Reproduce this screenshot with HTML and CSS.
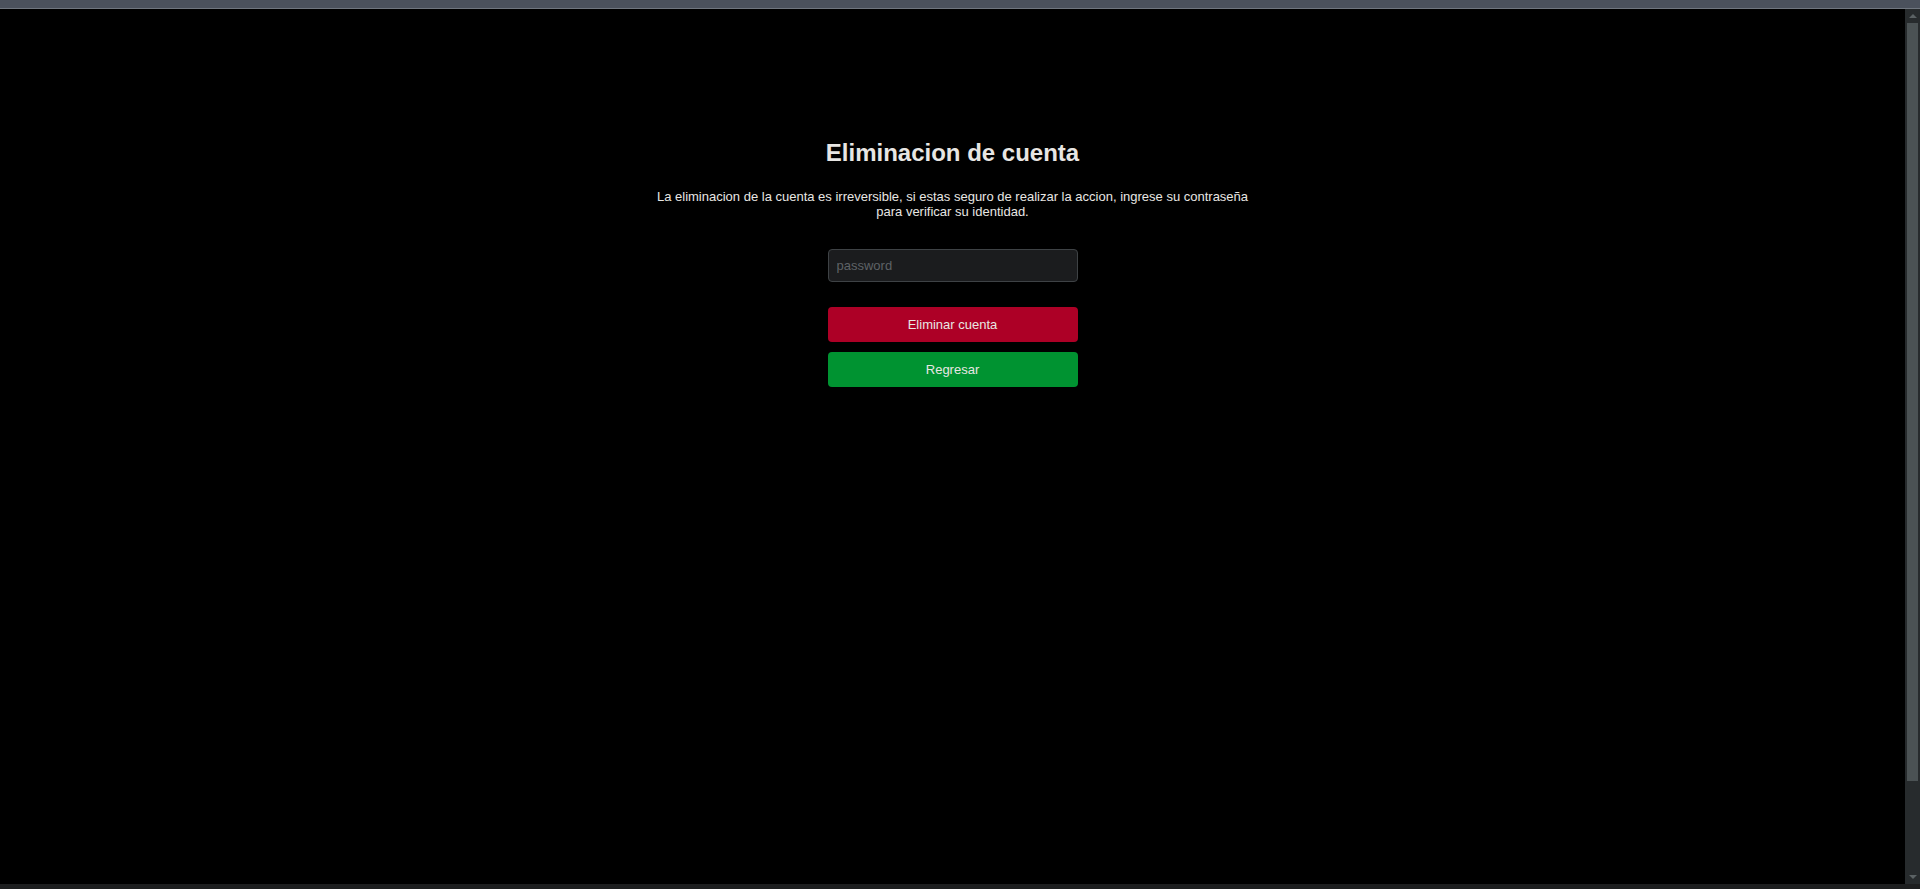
FILE: index.html
```html
<!DOCTYPE html>
<html lang="es">
<head>
<meta charset="utf-8">
<title>Eliminacion de cuenta</title>
<link rel="stylesheet" href="styles.css">
</head>
<body>
<div class="topbar"></div>
<div class="viewport">
  <main class="page">
    <h1 class="title">Eliminacion de cuenta</h1>
    <p class="notice">La eliminacion de la cuenta es irreversible, si estas seguro de realizar la accion, ingrese su contraseña para verificar su identidad.</p>
    <form class="form">
      <input class="field" type="password" placeholder="password">
      <div class="actions">
        <button type="button" class="btn btn-danger">Eliminar cuenta</button>
        <button type="button" class="btn btn-success">Regresar</button>
      </div>
    </form>
  </main>
  <div class="scrollbar">
    <div class="arrow"><span class="tri-up"></span></div>
    <div class="thumb"></div>
    <div class="track-rest"></div>
    <div class="arrow"><span class="tri-down"></span></div>
  </div>
</div>
<div class="bottombar"></div>
</body>
</html>
```

FILE: styles.css
```css
html, body {
  margin: 0;
  padding: 0;
  height: 889px;
  overflow: hidden;
  background: #000;
}
body {
  display: flex;
  flex-direction: column;
  font-family: "Liberation Sans", Arial, sans-serif;
  color: #e8e6e3;
}
.topbar {
  height: 8px;
  background: #4b515c;
  border-bottom: 1px solid #70767f;
  flex: none;
}
.viewport {
  flex: 1;
  display: flex;
  min-height: 0;
}
.page {
  flex: 1;
  display: flex;
  flex-direction: column;
  align-items: center;
  padding-top: 130px;
  background: #000;
}
.title {
  margin: 0;
  font-size: 24px;
  line-height: 28px;
  font-weight: bold;
  color: #e8e6e3;
}
.notice {
  margin: 22px 0 0;
  width: 600px;
  font-size: 13px;
  line-height: 15px;
  text-align: center;
  color: #e8e6e3;
}
.form {
  margin-top: 30px;
  display: flex;
  flex-direction: column;
  width: 250px;
}
.field {
  box-sizing: border-box;
  width: 250px;
  height: 33px;
  padding: 0 8px;
  background: #1b1c1e;
  border: 1px solid #3e4245;
  border-radius: 4px;
  color: #e8e6e3;
  font-family: "Liberation Sans", Arial, sans-serif;
  font-size: 13px;
  outline: none;
}
.field::placeholder {
  color: #5e6266;
}
.actions {
  margin-top: 25px;
  display: flex;
  flex-direction: column;
  gap: 10px;
}
.btn {
  height: 35px;
  width: 250px;
  border: none;
  border-radius: 4px;
  color: #e8e6e3;
  font-family: "Liberation Sans", Arial, sans-serif;
  font-size: 13px;
  cursor: pointer;
}
.btn-danger {
  background: #ad0026;
}
.btn-success {
  background: #009331;
}
.scrollbar {
  width: 15px;
  flex: none;
  background: #272b2d;
  display: flex;
  flex-direction: column;
  align-items: center;
}
.arrow {
  height: 14px;
  width: 15px;
  display: flex;
  align-items: center;
  justify-content: center;
  flex: none;
}
.tri-up {
  width: 0;
  height: 0;
  border-left: 4px solid transparent;
  border-right: 4px solid transparent;
  border-bottom: 4px solid #5b6264;
}
.tri-down {
  width: 0;
  height: 0;
  border-left: 4px solid transparent;
  border-right: 4px solid transparent;
  border-top: 4px solid #5b6264;
}
.thumb {
  width: 11px;
  height: 758px;
  background: #4b5254;
  flex: none;
}
.track-rest {
  flex: 1;
}
.bottombar {
  height: 5px;
  background: #1d1e1f;
  flex: none;
}
```
